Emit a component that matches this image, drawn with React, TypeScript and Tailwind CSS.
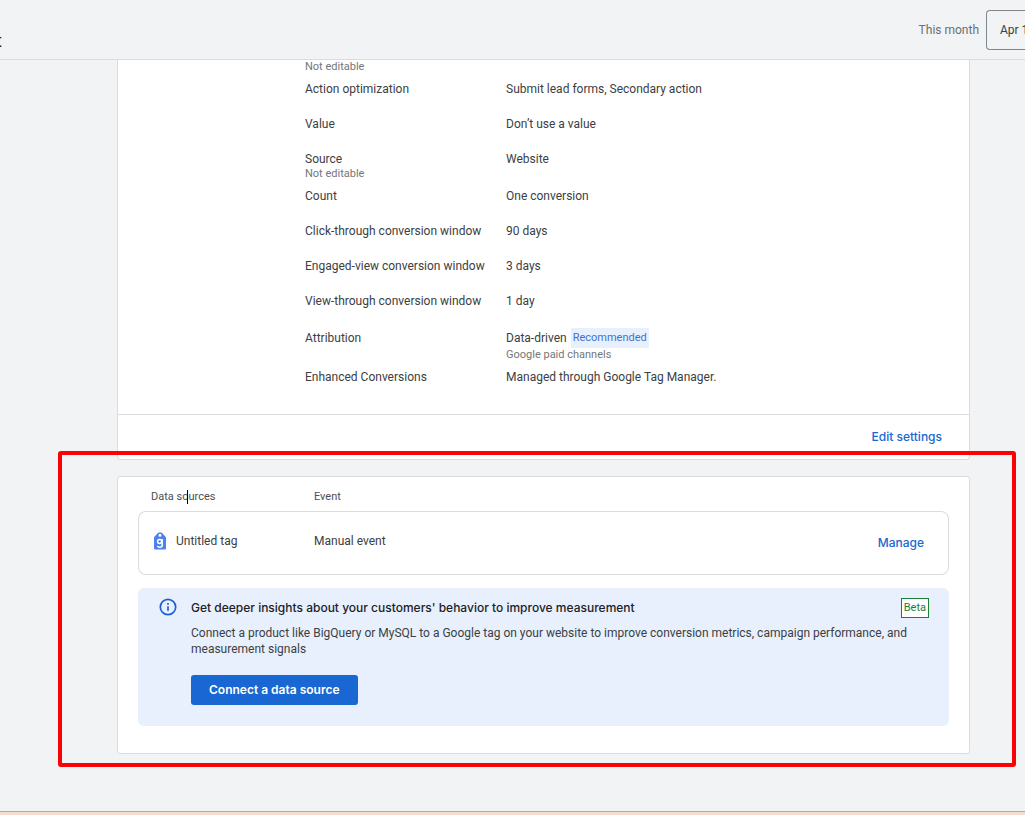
import type { ReactNode } from "react";

type Setting = {
  label: string;
  note?: string;
  value: string;
  badge?: string;
  detail?: string;
};

const SETTINGS: Setting[] = [
  { label: "Action optimization", value: "Submit lead forms, Secondary action" },
  { label: "Value", value: "Don’t use a value" },
  { label: "Source", note: "Not editable", value: "Website" },
  { label: "Count", value: "One conversion" },
  { label: "Click-through conversion window", value: "90 days" },
  { label: "Engaged-view conversion window", value: "3 days" },
  { label: "View-through conversion window", value: "1 day" },
  { label: "Attribution", value: "Data-driven", badge: "Recommended", detail: "Google paid channels" },
  { label: "Enhanced Conversions", value: "Managed through Google Tag Manager." },
];

function Note({ children }: { children: ReactNode }) {
  return <span className="block text-[11px] leading-[14px] text-[#747779]">{children}</span>;
}

function SettingRow({ row }: { row: Setting }) {
  const line = row.badge ? "leading-5" : "leading-4";
  return (
    <div className="flex min-h-[35px] pb-[7px]">
      <dt className={`w-[201px] shrink-0 ${line}`}>
        {row.label}
        {row.note && <Note>{row.note}</Note>}
      </dt>
      <dd className={line}>
        <div className="flex items-center gap-1">
          {row.value}
          {row.badge && <span className="bg-[#e8f0fe] px-0.5 text-[11px] text-[#3f72cf]">{row.badge}</span>}
        </div>
        {row.detail && <Note>{row.detail}</Note>}
      </dd>
    </div>
  );
}

function TagIcon() {
  return (
    <svg width="12" height="18" viewBox="0 0 12 18" aria-hidden="true" className="shrink-0">
      <path
        fillRule="evenodd"
        fill="#4c82ec"
        d="M4.4.5h3.2L11.4 4.6c.4.4.6.9.6 1.4v10.2c0 .8-.6 1.3-1.3 1.3H1.3C.6 17.5 0 17 0 16.2V6c0-.5.2-1 .6-1.4zM6 1.8a1.5 1.5 0 1 0 0 3 1.5 1.5 0 0 0 0-3z"
      />
      <circle cx="5.6" cy="9.6" r="2" fill="none" stroke="#fff" strokeWidth="1.5" />
      <path d="M8.2 7v6.2c0 1.3-1 2-2.5 2-1 0-1.9-.3-2.4-1.1" fill="none" stroke="#fff" strokeWidth="1.5" />
    </svg>
  );
}

function InfoIcon() {
  return (
    <svg width="18" height="18" viewBox="0 0 18 18" aria-hidden="true" className="shrink-0">
      <circle cx="9" cy="9" r="7.7" fill="none" stroke="#1d5fd0" strokeWidth="1.7" />
      <path d="M9 8.2v4.6M9 5v1.7" stroke="#1d5fd0" strokeWidth="1.7" />
    </svg>
  );
}

export default function App() {
  return (
    <div className="flex min-h-screen flex-col overflow-hidden bg-[#f1f3f4] font-['Roboto',sans-serif] text-[12px] text-[#3c4043]">
      <header className="flex h-[60px] items-center justify-between border-b border-[#d9dcdf]">
        <h1 className="flex w-0.5 justify-end self-end overflow-hidden pb-1.5 text-[18px] leading-6 text-[#202124]">t</h1>
        <div className="flex items-center gap-[7px]">
          <span className="text-[#6b6f73]">This month</span>
          <button
            type="button"
            className="h-10 w-[39px] overflow-hidden rounded-l border border-r-0 border-[#80868b] pl-[13px] text-left whitespace-nowrap"
          >
            Apr 1
          </button>
        </div>
      </header>

      <main className="flex flex-1 flex-col gap-4 pr-[55px] pl-[117px]">
        <section className="rounded-b border border-t-0 border-[#dadce0] bg-white">
          <dl className="pr-6 pb-[10px] pl-[187px]">
            <div className="pb-[7px]">
              <dt>
                <Note>Not editable</Note>
              </dt>
            </div>
            {SETTINGS.map((row) => (
              <SettingRow key={row.label} row={row} />
            ))}
          </dl>
          <div className="flex h-[45px] items-center justify-end border-t border-[#dadce0] pr-[27px]">
            <button type="button" className="font-['Inter',sans-serif] font-medium text-[#1967d2]">
              Edit settings
            </button>
          </div>
        </section>

        <section className="relative rounded-[3px] border border-[#dadce0] bg-white px-5 pb-[27px]">
          <table className="w-full border-separate border-spacing-0 text-left">
            <thead>
              <tr className="h-[34px] align-bottom text-[11px] leading-4 text-[#4b4f53]">
                <th className="w-[176px] pb-1.5 pl-[13px] font-normal">
                  <span className="relative">
                    Data sources
                    <span className="absolute top-0 left-9 h-3.5 w-px bg-black" />
                  </span>
                </th>
                <th className="pb-1.5 font-normal">Event</th>
                <td />
              </tr>
            </thead>
            <tbody>
              <tr className="h-16">
                <td className="rounded-l-lg border border-r-0 border-[#dadce0] pb-1 pl-[15px]">
                  <div className="flex items-center gap-[10px]">
                    <TagIcon />
                    Untitled tag
                  </div>
                </td>
                <td className="border-y border-[#dadce0] pb-1">Manual event</td>
                <td className="rounded-r-lg border border-l-0 border-[#dadce0] pr-6 text-right">
                  <button type="button" className="font-['Inter',sans-serif] font-medium text-[#1967d2]">
                    Manage
                  </button>
                </td>
              </tr>
            </tbody>
          </table>

          <div className="mt-[13px] flex gap-3.5 rounded-md bg-[#e8f0fe] pt-[10px] pr-5 pb-[21px] pl-[21px]">
            <InfoIcon />
            <div className="flex-1">
              <div className="flex items-center justify-between">
                <h2 className="font-['Inter',sans-serif] font-medium text-[#202124]">
                  Get deeper insights about your customers' behavior to improve measurement
                </h2>
                <span className="border border-[#188038] bg-white px-0.5 text-[11px] leading-[18px] text-[#188038]">Beta</span>
              </div>
              <p className="mt-[7px] leading-4">
                Connect a product like BigQuery or MySQL to a Google tag on your website to improve conversion metrics,
                campaign performance, and measurement signals
              </p>
              <button
                type="button"
                className="mt-[18px] h-[30px] rounded-[3px] bg-[#1967d2] px-[18px] font-['Inter',sans-serif] font-semibold text-white"
              >
                Connect a data source
              </button>
            </div>
          </div>

          <div className="pointer-events-none absolute -top-[26px] -right-[47px] -bottom-3.5 -left-[60px] rounded-[3px] border-4 border-[#fb0207]" />
        </section>
      </main>

      <footer className="h-1 border-t border-[#b5aaa5] bg-[#f3ddd2]" />
    </div>
  );
}
